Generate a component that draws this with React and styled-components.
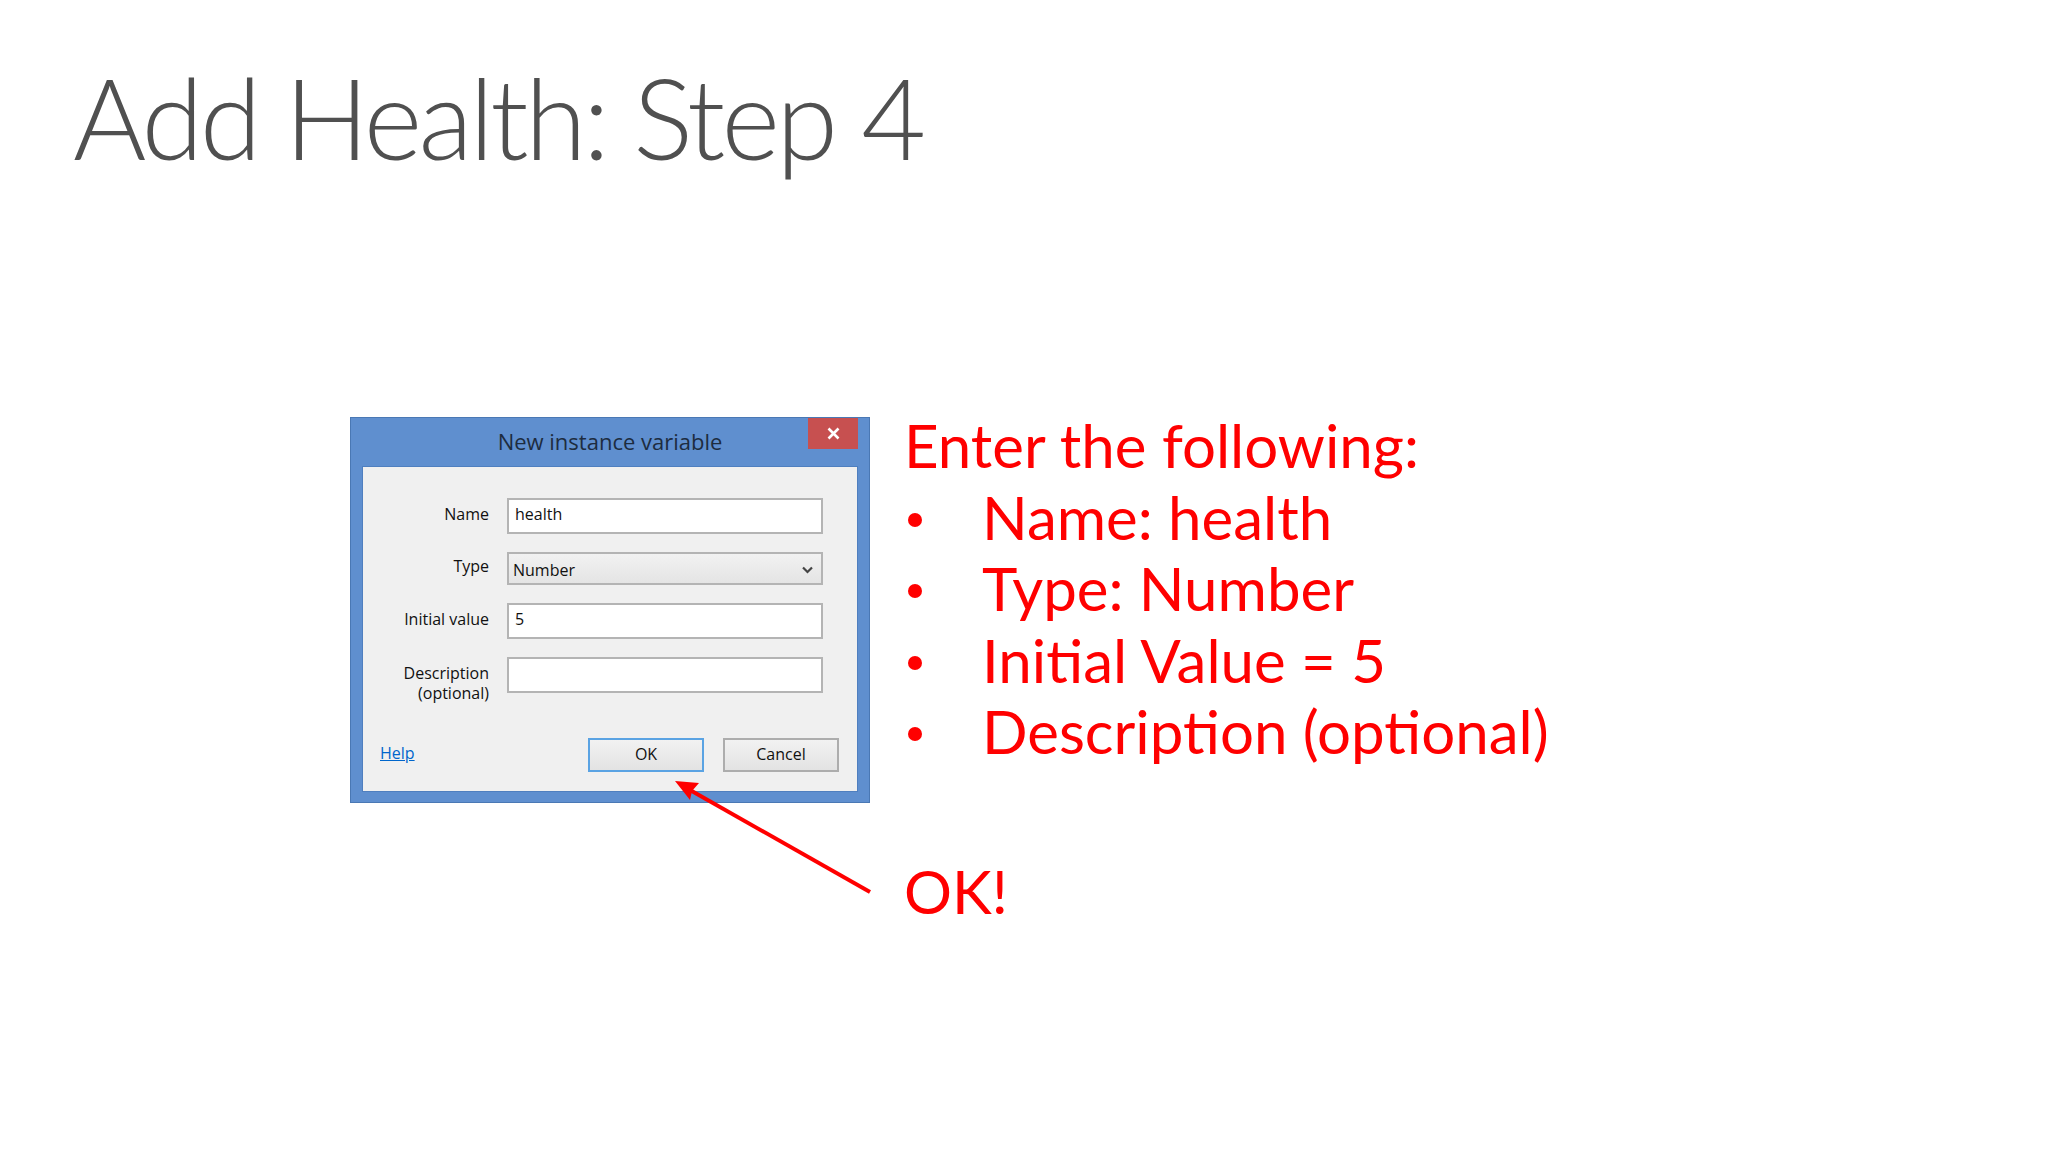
import styled, { createGlobalStyle } from "styled-components";

const GlobalStyle = createGlobalStyle`
  html, body {
    margin: 0;
    padding: 0;
    background: #ffffff;
  }
  body {
    font-family: "Open Sans", "Liberation Sans", sans-serif;
  }
`;

const Slide = styled.div`
  position: relative;
  width: 2048px;
  height: 1152px;
  box-sizing: border-box;
  padding: 61px 0 0 73px;
  overflow: hidden;
`;

const Title = styled.h1`
  margin: 0;
  font-family: "Lato", "Open Sans", sans-serif;
  font-weight: 300;
  font-size: 112px;
  line-height: 112px;
  letter-spacing: -3.6px;
  color: #505050;
`;

const Body = styled.div`
  display: flex;
  align-items: flex-start;
  margin-top: 244px;
  padding-left: 277px;
`;

const Dialog = styled.div`
  width: 520px;
  height: 386px;
  box-sizing: border-box;
  display: flex;
  flex-direction: column;
  padding: 0 11px 10px;
  background: #5f8fcf;
  border: 1px solid #4a78b4;
`;

const TitleBar = styled.div`
  display: grid;
  grid-template-columns: 50px 1fr 50px;
  height: 48px;
`;

const DialogTitle = styled.div`
  grid-column: 2;
  text-align: center;
  font-size: 22px;
  line-height: 46px;
  color: #1d2c40;
`;

const CloseButton = styled.div`
  grid-column: 3;
  width: 50px;
  height: 31px;
  display: flex;
  align-items: center;
  justify-content: center;
  background: #c75050;
`;

const Panel = styled.div`
  flex: 1;
  display: flex;
  flex-direction: column;
  padding-top: 31px;
  background: #f0f0f0;
  border: 1px solid #4f7fbf;
`;

const Form = styled.div`
  display: grid;
  grid-template-columns: 126px 316px;
  column-gap: 18px;
  row-gap: 18px;
  align-items: start;
`;

const Label = styled.div`
  padding-top: ${(p) => (p.$top ? p.$top : 6)}px;
  text-align: right;
  font-size: 16px;
  line-height: 20px;
  color: #111;
`;

const Field = styled.input`
  box-sizing: border-box;
  width: 316px;
  height: 36px;
  margin: 0;
  padding: 0 6px 4px;
  border: 2px solid #b4b4b4;
  background: #ffffff;
  font-family: "Open Sans", "Liberation Sans", sans-serif;
  font-size: 16px;
  color: #111;
  outline: none;
`;

const Select = styled.div`
  box-sizing: border-box;
  width: 316px;
  height: 33px;
  display: flex;
  align-items: center;
  justify-content: space-between;
  padding: 2px 8px 0 4px;
  border: 2px solid #b4b4b4;
  background: linear-gradient(#f2f2f2, #e4e4e4);
  font-size: 16px;
  color: #111;
`;

const Footer = styled.div`
  display: flex;
  align-items: center;
  gap: 19px;
  margin-top: 35px;
  padding: 0 18px 0 17px;
`;

const HelpLink = styled.a`
  margin: 0 auto 4px 0;
  font-size: 16px;
  line-height: 20px;
  color: #0066cc;
  text-decoration: underline;
`;

const Button = styled.div`
  box-sizing: border-box;
  width: 116px;
  height: 34px;
  display: flex;
  align-items: center;
  justify-content: center;
  padding-bottom: 2px;
  border: 2px solid ${(p) => (p.$primary ? "#5aa3e3" : "#adadad")};
  background: linear-gradient(#f2f2f2, #e3e3e3);
  font-size: 16px;
  color: #111;
`;

const Notes = styled.div`
  margin: -7px 0 0 34px;
  font-family: "Lato", "Open Sans", sans-serif;
  font-size: 60px;
  line-height: 71.5px;
  color: #ff0000;
`;

const List = styled.ul`
  margin: 0;
  padding: 0;
  list-style: none;
`;

const Item = styled.li`
  padding-left: 4px;
`;

const Dot = styled.span`
  display: inline-block;
  width: 14px;
  height: 14px;
  margin: 0 60px 13px 0;
  border-radius: 50%;
  background: #ff0000;
`;

const OkNote = styled.div`
  margin-top: 88px;
`;

const Arrow = styled.svg`
  position: absolute;
  left: 660px;
  top: 770px;
  overflow: visible;
`;

const rows = [
  { label: "Name", value: "health" },
  { label: "Type", select: "Number", top: 4 },
  { label: "Initial value", value: "5" },
  { label: ["Description", "(optional)"], value: "" },
];

export default function App() {
  return (
    <>
      <GlobalStyle />
      <Slide>
        <Title>Add Health: Step 4</Title>

        <Body>
          <Dialog>
            <TitleBar>
              <DialogTitle>New instance variable</DialogTitle>
              <CloseButton>
                <svg width="13" height="13" viewBox="0 0 13 13">
                  <path d="M1.5 1.5 L11.5 11.5 M11.5 1.5 L1.5 11.5" stroke="#ffffff" strokeWidth="2.6" />
                </svg>
              </CloseButton>
            </TitleBar>

            <Panel>
              <Form>
                {rows.map((row, i) => [
                  <Label key={"l" + i} $top={row.top}>
                    {Array.isArray(row.label)
                      ? row.label.map((t) => <div key={t}>{t}</div>)
                      : row.label}
                  </Label>,
                  row.select ? (
                    <Select key={"f" + i}>
                      <span>{row.select}</span>
                      <svg width="11" height="8" viewBox="0 0 11 8">
                        <path d="M1 1.5 L5.5 6 L10 1.5" fill="none" stroke="#444" strokeWidth="2.2" />
                      </svg>
                    </Select>
                  ) : (
                    <Field key={"f" + i} defaultValue={row.value} readOnly />
                  ),
                ])}
              </Form>

              <Footer>
                <HelpLink href="#">Help</HelpLink>
                <Button $primary>OK</Button>
                <Button>Cancel</Button>
              </Footer>
            </Panel>
          </Dialog>

          <Notes>
            <div>Enter the following:</div>
            <List>
              <Item><Dot />Name: health</Item>
              <Item><Dot />Type: Number</Item>
              <Item><Dot />Initial Value = 5</Item>
              <Item><Dot />Description (optional)</Item>
            </List>
            <OkNote>OK!</OkNote>
          </Notes>
        </Body>

        <Arrow width="220" height="130" viewBox="0 0 220 130">
          <line x1="210" y1="122" x2="30" y2="20" stroke="#ff0000" strokeWidth="4" />
          <polygon points="15,11 39,13 32,21 30,30" fill="#ff0000" />
        </Arrow>
      </Slide>
    </>
  );
}
